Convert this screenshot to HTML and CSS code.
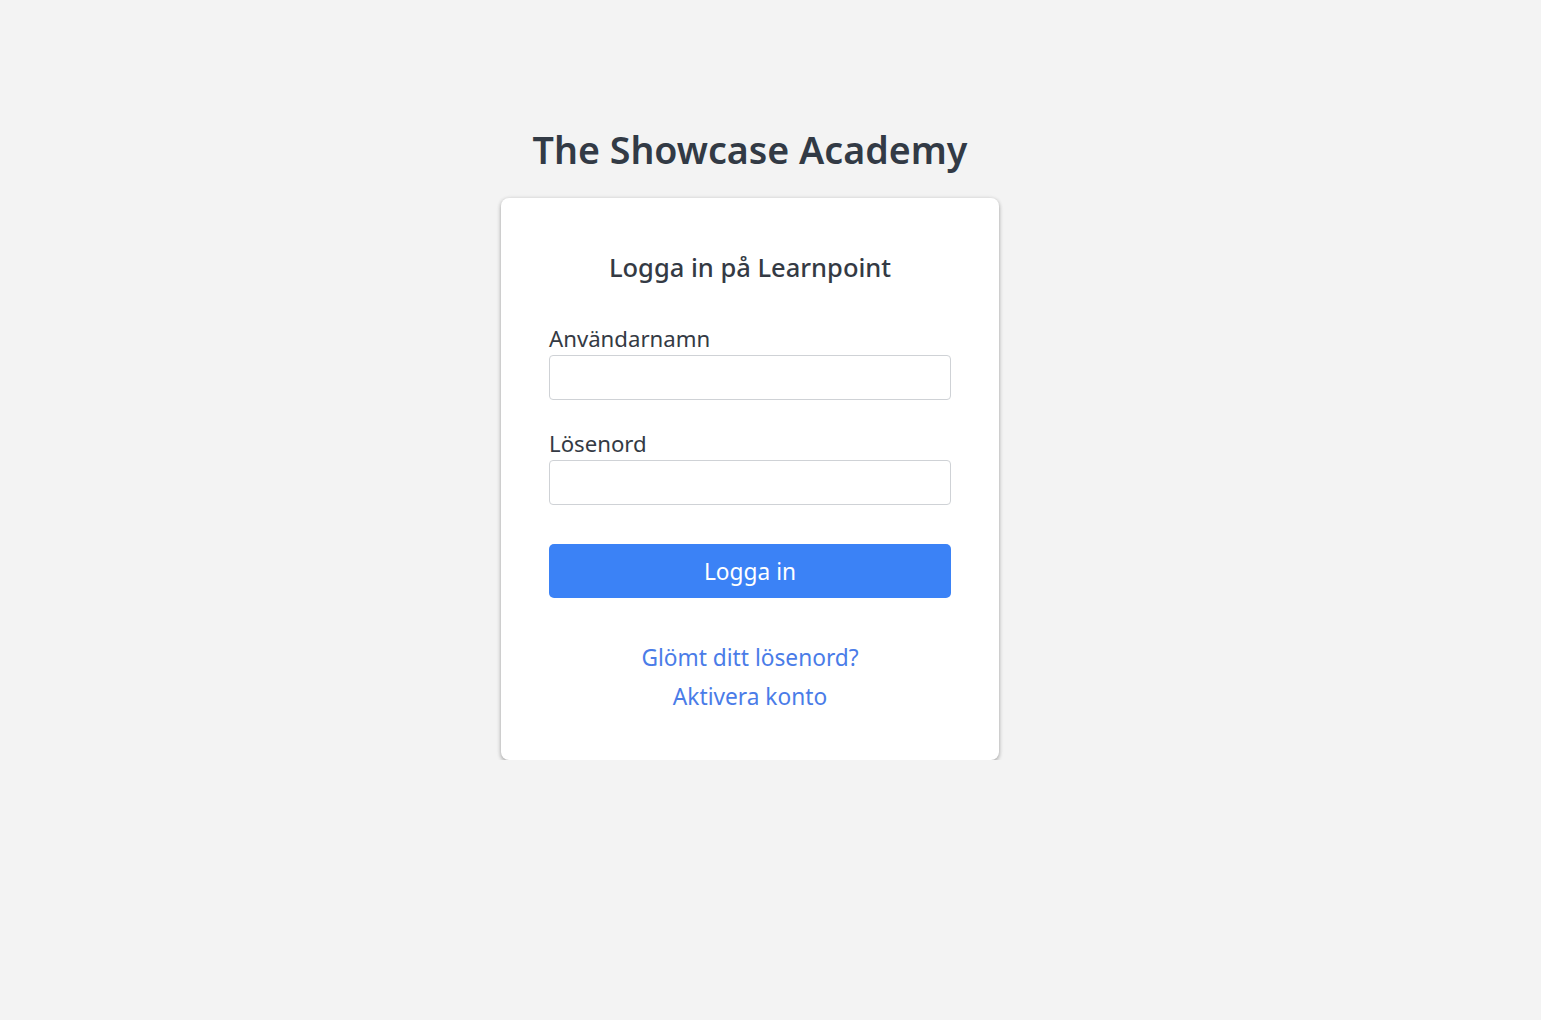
FILE: index.html
```html
<!DOCTYPE html>
<html lang="sv">
  <head>
    <meta charset="UTF-8" />
    <meta name="viewport" content="width=device-width, initial-scale=1.0" />
    <title>Logga in - The Showcase Academy</title>
    <link rel="stylesheet" href="styles.css">
  </head>
  <body>
    <div class="page">
      <h1 class="school_name">The Showcase Academy</h1>
      <div class="login_card">
        <h2 class="login_title">Logga in på Learnpoint</h2>
        <form class="login_form">
          <div class="field">
            <label for="username">Användarnamn</label>
            <input type="text" id="username" />
          </div>
          <div class="field">
            <label for="password">Lösenord</label>
            <input type="password" id="password" />
          </div>
          <button type="button">Logga in</button>
        </form>
        <div class="links">
          <a href="#">Glömt ditt lösenord?</a>
          <a href="#">Aktivera konto</a>
        </div>
      </div>
    </div>
  </body>
</html>
```
FILE: styles.css
```css
body {
  margin: 0;
  background-color: #f3f3f3;
  font-family: "Noto Sans", "Open Sans", sans-serif;
  color: #343a44;
}
.page {
  width: 1500px;
  display: flex;
  flex-direction: column;
  align-items: center;
  padding-top: 126px;
}
.school_name {
  margin: 0 0 24px;
  font-size: 37.6px;
  line-height: 48px;
  font-weight: 600;
  color: #323a45;
}
.login_card {
  box-sizing: border-box;
  width: 498px;
  padding: 48px 48px 44px;
  background-color: #fff;
  border-radius: 8px;
  box-shadow: 0 2px 4px rgba(0, 0, 0, 0.3), 0 0 4px rgba(0, 0, 0, 0.08);
}
.login_title {
  margin: 0;
  text-align: center;
  font-size: 25.5px;
  line-height: 42px;
  font-weight: 500;
}
.login_form {
  margin-top: 34px;
}
.field {
  display: flex;
  flex-direction: column;
  margin-bottom: 27px;
}
.field label {
  font-size: 22.2px;
  line-height: 33px;
}
.field input {
  box-sizing: border-box;
  height: 45px;
  border: 1px solid #cfd2d6;
  border-radius: 4px;
  font-size: 20px;
  padding: 0 10px;
}
button {
  display: block;
  width: 100%;
  height: 54px;
  margin-top: 39px;
  border: none;
  border-radius: 5px;
  background-color: #3b82f6;
  color: #fff;
  font-family: inherit;
  font-size: 22.7px;
}
.links {
  display: flex;
  flex-direction: column;
  align-items: center;
  margin-top: 40px;
}
.links a {
  font-size: 22.7px;
  line-height: 39px;
  color: #4a7ce8;
  text-decoration: none;
}
```
